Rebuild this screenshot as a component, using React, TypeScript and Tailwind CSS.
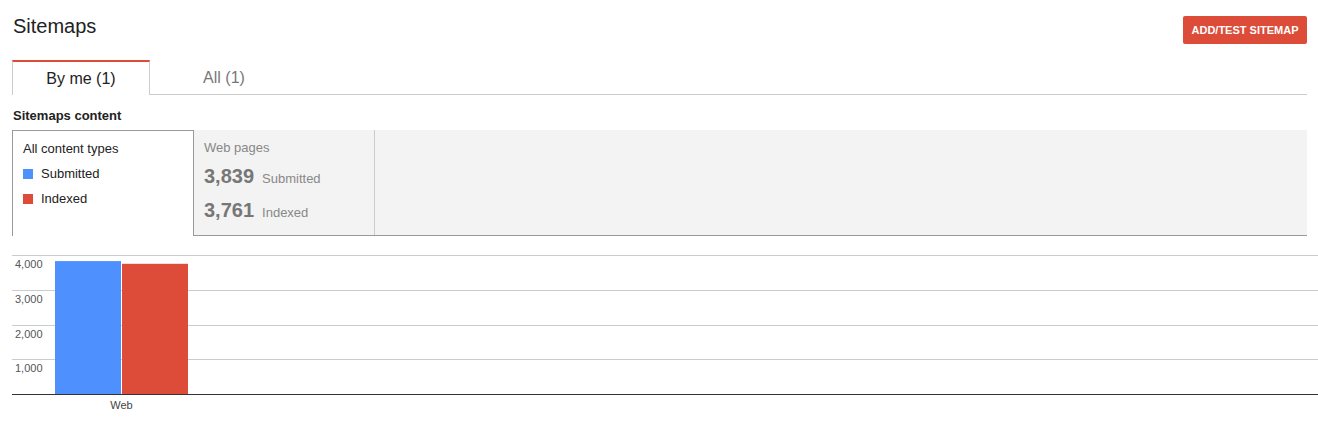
const bars = [
  { label: "Submitted", value: 3839, color: "#4d90fe" },
  { label: "Indexed", value: 3761, color: "#dd4b39" },
]

const ticks = [4000, 3000, 2000, 1000]

// chart geometry, in svg px
const top = 5.5
const base = 144.5
const maxVal = 4000

function yFor(v: number) {
  return base - (v / maxVal) * (base - top)
}

function Chart() {
  return (
    <svg width={1306} height={170} className="block">
      {ticks.map((t) => {
        const y = Math.round(yFor(t) - 0.5) + 0.5
        return (
          <g key={t}>
            <line x1={0} x2={1306} y1={y} y2={y} stroke="#cccccc" strokeWidth={1} />
            <text x={3} y={y + 12} fontSize={11} fill="#555" fontFamily="'Liberation Sans', Arial, sans-serif">
              {t.toLocaleString("en-US")}
            </text>
          </g>
        )
      })}
      {bars.map((b, i) => {
        const y = yFor(b.value)
        return <rect key={b.label} x={43 + i * 67} y={y} width={66} height={base - y} fill={b.color} />
      })}
      <line x1={0} x2={1306} y1={base} y2={base} stroke="#333" strokeWidth={1} />
      <text x={109.5} y={159} fontSize={11} fill="#444" textAnchor="middle" fontFamily="'Liberation Sans', Arial, sans-serif">
        Web
      </text>
    </svg>
  )
}

export default function App() {
  return (
    <div className="min-h-[421px] bg-white font-['Liberation_Sans',Arial,sans-serif] pl-[12px] pr-[11px]">
      {/* Header */}
      <div className="flex justify-between h-[60px]">
        <h1 className="pt-[14px] pl-[1px] text-[20px] leading-[24px] font-normal text-[#222]">Sitemaps</h1>
        <button className="mt-[16px] h-[28px] w-[124px] rounded-[2px] bg-[#dd4b39] text-white text-[11px] font-bold uppercase">
          Add/Test Sitemap
        </button>
      </div>

      {/* Tabs */}
      <div className="flex h-[35px]">
        <div className="w-[138px] border-l border-r border-[#ccc] border-t-2 border-t-[#dd4b39] flex items-center justify-center text-[16px] text-[#222] pt-[1px]">
          By me (1)
        </div>
        <div className="w-[148px] border-b border-[#ccc] flex items-center justify-center text-[16px] text-[#777] pt-[2px]">
          All (1)
        </div>
        <div className="flex-1 border-b border-[#ccc]" />
      </div>

      <div className="h-[35px] pt-[13px] pl-[1px] text-[13px] leading-[16px] font-bold text-[#222]">Sitemaps content</div>

      {/* Content types */}
      <div className="flex h-[106px]">
        <div className="w-[182px] border-l border-t border-r border-[#999] bg-white pl-[10px] pt-[10px] text-[13px] leading-[16px] text-[#222] flex flex-col gap-[9px]">
          <div>All content types</div>
          {bars.map((b) => (
            <div key={b.label} className="flex items-center gap-[8px]">
              <span className="w-[10px] h-[10px]" style={{ backgroundColor: b.color }} />
              <span>{b.label}</span>
            </div>
          ))}
        </div>
        <div className="flex-1 flex bg-[#f3f3f3] border-b border-[#999]">
          <div className="w-[181px] border-r border-[#ccc] pl-[10px] pt-[10px]">
            <div className="text-[13px] leading-[16px] text-[#888]">Web pages</div>
            <div className="mt-[8px] h-[24px] flex items-baseline leading-[24px]">
              <span className="text-[20px] font-bold text-[#777]">3,839</span>
              <span className="ml-[8px] text-[13px] text-[#888]">Submitted</span>
            </div>
            <div className="mt-[10px] h-[24px] flex items-baseline leading-[24px]">
              <span className="text-[20px] font-bold text-[#777]">3,761</span>
              <span className="ml-[8px] text-[13px] text-[#888]">Indexed</span>
            </div>
          </div>
        </div>
      </div>

      {/* Chart */}
      <div className="mt-[14px] -mr-[11px]">
        <Chart />
      </div>
    </div>
  )
}
